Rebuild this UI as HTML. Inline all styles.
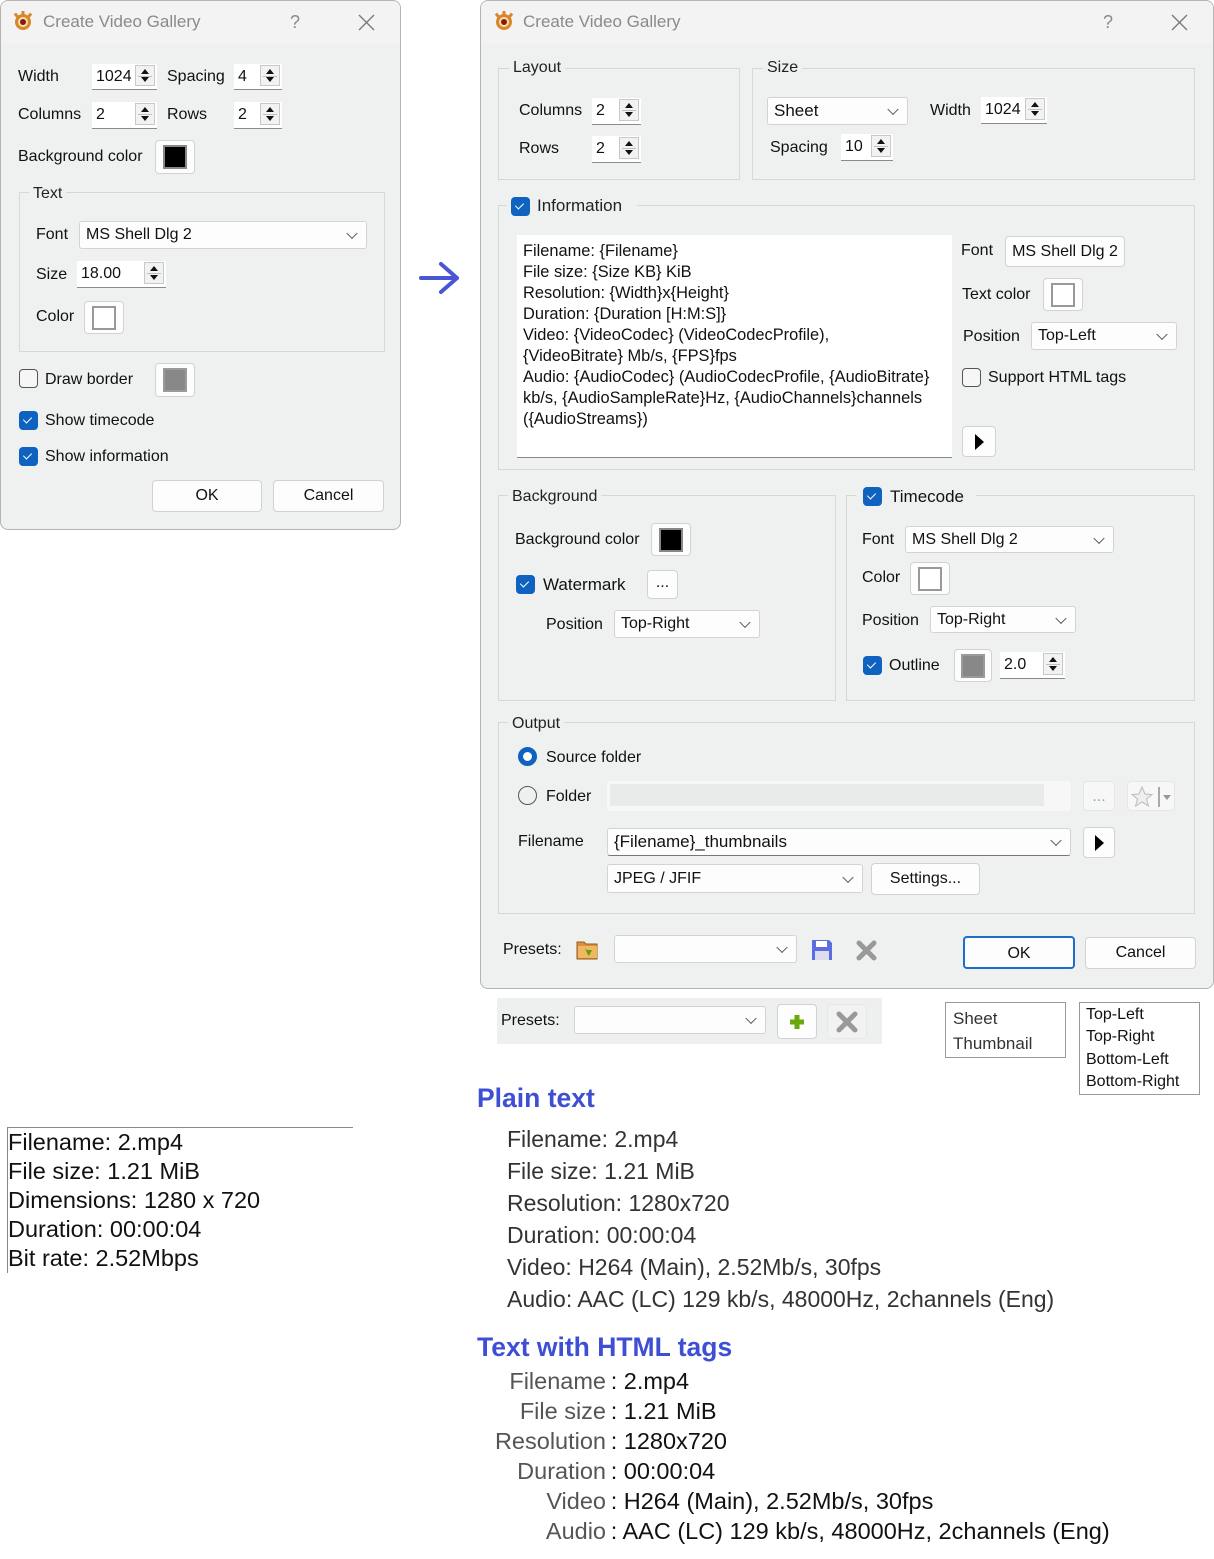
<!DOCTYPE html>
<html><head><meta charset="utf-8"><style>
*{box-sizing:border-box;margin:0;padding:0}
body{width:1214px;height:1559px;background:#fff;position:relative;overflow:hidden;font-family:"Liberation Sans",sans-serif;color:#111}
.a{position:absolute}
.t{position:absolute;white-space:nowrap;font-size:16px;line-height:20px}
.dlg{position:absolute;background:#eff0f0;border:1px solid #b4b4b4;border-radius:8px;overflow:hidden}
.ttl{position:absolute;left:0;top:0;right:0;height:43px;background:#f3f3f3}
.ttx{position:absolute;font-size:17px;color:#8a8a8a;white-space:nowrap;line-height:20px}
.grp{position:absolute;border:1px solid #d6d7d7}
.gl{position:absolute;background:#eff0f0;padding:0 4px;font-size:16px;line-height:20px;white-space:nowrap;color:#222}
.in{position:absolute;background:#fff;border-bottom:1px solid #8a8a8a;font-size:16px;line-height:22px;padding:2px 4px;white-space:nowrap}
.sp{position:absolute;top:1px;right:2px;width:20px;bottom:3px;border:1px solid #c8c8c8;background:#f2f2f2}
.sp:before{content:"";position:absolute;left:5px;top:3px;border-left:4px solid transparent;border-right:4px solid transparent;border-bottom:5px solid #111}
.sp:after{content:"";position:absolute;left:5px;bottom:3px;border-left:4px solid transparent;border-right:4px solid transparent;border-top:5px solid #111}
.sp i{position:absolute;left:2px;right:2px;top:50%;border-top:1px solid #c0c0c0}
.btn{position:absolute;background:#fdfdfd;border:1px solid #d2d2d2;border-radius:4px;font-size:16px;text-align:center;white-space:nowrap}
.sw{position:absolute;left:50%;top:50%;transform:translate(-50%,-50%);width:24px;height:24px;border:2px solid #999}
.cmb{position:absolute;background:#fdfdfd;border:1px solid #d3d3d3;border-radius:3px;font-size:16px;white-space:nowrap;padding-left:6px}
.cmb:after{content:"";position:absolute;right:10px;top:50%;width:7px;height:7px;border-right:1px solid #555;border-bottom:1px solid #555;transform:translateY(-70%) rotate(45deg)}
.ck{position:absolute;width:19px;height:19px;border-radius:4px;background:#0f62c0}
.ck:after{content:"";position:absolute;left:6px;top:4px;width:4px;height:7px;border-right:1px solid #fff;border-bottom:1px solid #fff;transform:rotate(45deg)}
.uck{position:absolute;width:19px;height:19px;border-radius:4px;border:1px solid #555;background:#f6f6f6}
.play{position:absolute;background:#fdfdfd;border:1px solid #d2d2d2;border-radius:4px}
.play:after{content:"";position:absolute;left:50%;top:50%;margin:-8px 0 0 -4px;border-top:8px solid transparent;border-bottom:8px solid transparent;border-left:9px solid #000}
.logo{position:absolute;width:22px;height:22px}
</style></head><body>

<!-- LEFT DIALOG -->
<div class="dlg" style="left:0;top:0;width:401px;height:530px">
 <div class="ttl"></div>
 <svg class="logo" style="left:11px;top:9px" viewBox="0 0 22 22"><g fill="#d9862a"><circle cx="11" cy="12" r="8"/><rect x="9.5" y="1" width="3" height="5"/><rect x="3" y="3" width="3" height="5" transform="rotate(-40 4.5 5.5)"/><rect x="16" y="3" width="3" height="5" transform="rotate(40 17.5 5.5)"/></g><circle cx="11" cy="12" r="5" fill="#f6e0b0"/><circle cx="11" cy="12" r="3" fill="#8a1a0a"/></svg>
 <div class="ttx" style="left:42px;top:11px">Create Video Gallery</div>
 <div class="ttx" style="left:289px;top:11px;font-size:18px">?</div>
 <svg class="a" style="left:357px;top:13px" width="17" height="17"><path d="M1 1L16 16M16 1L1 16" stroke="#777" stroke-width="1.3"/></svg>

 <div class="t" style="left:17px;top:66px">Width</div>
 <div class="in" style="left:91px;top:63px;width:65px;height:26px">1024<div class="sp"><i></i></div></div>
 <div class="t" style="left:166px;top:66px">Spacing</div>
 <div class="in" style="left:233px;top:63px;width:48px;height:26px">4<div class="sp"><i></i></div></div>
 <div class="t" style="left:17px;top:104px">Columns</div>
 <div class="in" style="left:91px;top:101px;width:65px;height:27px">2<div class="sp"><i></i></div></div>
 <div class="t" style="left:166px;top:104px">Rows</div>
 <div class="in" style="left:233px;top:101px;width:48px;height:27px">2<div class="sp"><i></i></div></div>
 <div class="t" style="left:17px;top:146px">Background color</div>
 <div class="btn" style="left:154px;top:139px;width:40px;height:34px"><div class="sw" style="background:#000;border-color:#888"></div></div>

 <div class="grp" style="left:18px;top:191px;width:366px;height:160px"></div>
 <div class="gl" style="left:28px;top:183px">Text</div>
 <div class="t" style="left:35px;top:224px">Font</div>
 <div class="cmb" style="left:78px;top:220px;width:288px;height:28px;line-height:26px">MS Shell Dlg 2</div>
 <div class="t" style="left:35px;top:264px">Size</div>
 <div class="in" style="left:76px;top:260px;width:89px;height:27px">18.00<div class="sp"><i></i></div></div>
 <div class="t" style="left:35px;top:306px">Color</div>
 <div class="btn" style="left:83px;top:300px;width:40px;height:33px"><div class="sw" style="background:#fff"></div></div>

 <div class="uck" style="left:18px;top:368px"></div>
 <div class="t" style="left:44px;top:369px">Draw border</div>
 <div class="btn" style="left:154px;top:362px;width:40px;height:34px"><div class="sw" style="background:#888;border-color:#9a9a9a"></div></div>
 <div class="ck" style="left:18px;top:410px"></div>
 <div class="t" style="left:44px;top:410px">Show timecode</div>
 <div class="ck" style="left:18px;top:446px"></div>
 <div class="t" style="left:44px;top:446px">Show information</div>
 <div class="btn" style="left:151px;top:479px;width:110px;height:32px;line-height:30px">OK</div>
 <div class="btn" style="left:272px;top:479px;width:111px;height:32px;line-height:30px">Cancel</div>
</div>

<!-- ARROW -->
<svg class="a" style="left:418px;top:260px" width="44" height="38"><path d="M3 18H39M23 4L39 18L23 32" stroke="#4a55d6" stroke-width="4" fill="none" stroke-linecap="round" stroke-linejoin="round"/></svg>

<!-- RIGHT DIALOG -->
<div class="dlg" style="left:480px;top:0;width:734px;height:989px">
 <div class="ttl"></div>
 <svg class="logo" style="left:12px;top:9px" viewBox="0 0 22 22"><g fill="#d9862a"><circle cx="11" cy="12" r="8"/><rect x="9.5" y="1" width="3" height="5"/><rect x="3" y="3" width="3" height="5" transform="rotate(-40 4.5 5.5)"/><rect x="16" y="3" width="3" height="5" transform="rotate(40 17.5 5.5)"/></g><circle cx="11" cy="12" r="5" fill="#f6e0b0"/><circle cx="11" cy="12" r="3" fill="#8a1a0a"/></svg>
 <div class="ttx" style="left:42px;top:11px">Create Video Gallery</div>
 <div class="ttx" style="left:622px;top:11px;font-size:18px">?</div>
 <svg class="a" style="left:690px;top:13px" width="17" height="17"><path d="M1 1L16 16M16 1L1 16" stroke="#777" stroke-width="1.3"/></svg>
</div>
<div class="grp" style="left:498px;top:68px;width:242px;height:112px"></div>
<div class="gl" style="left:509px;top:58px">Layout</div>
<div class="t" style="left:519px;top:101px">Columns</div>
<div class="in" style="left:592px;top:98px;width:49px;height:27px">2<div class="sp"><i></i></div></div>
<div class="t" style="left:519px;top:139px">Rows</div>
<div class="in" style="left:592px;top:136px;width:49px;height:27px">2<div class="sp"><i></i></div></div>

<div class="grp" style="left:752px;top:68px;width:443px;height:112px"></div>
<div class="gl" style="left:763px;top:58px">Size</div>
<div class="cmb" style="left:767px;top:97px;width:141px;height:28px;line-height:26px;font-size:17px">Sheet</div>
<div class="t" style="left:930px;top:101px">Width</div>
<div class="in" style="left:981px;top:97px;width:66px;height:27px">1024<div class="sp"><i></i></div></div>
<div class="t" style="left:770px;top:138px">Spacing</div>
<div class="in" style="left:841px;top:134px;width:52px;height:27px">10<div class="sp"><i></i></div></div>

<div class="grp" style="left:498px;top:205px;width:697px;height:265px"></div>
<div class="gl" style="left:507px;top:196px;width:130px;height:22px"></div>
<div class="ck" style="left:511px;top:197px"></div>
<div class="t" style="left:537px;top:196px;font-size:17px;color:#222">Information</div>
<div class="a" style="left:517px;top:235px;width:435px;height:223px;background:#fff;border-bottom:1px solid #888;padding:6px 6px;font-size:16.4px;line-height:21px;white-space:nowrap;overflow:hidden">Filename: {Filename}<br>File size: {Size KB} KiB<br>Resolution: {Width}x{Height}<br>Duration: {Duration [H:M:S]}<br>Video: {VideoCodec} (VideoCodecProfile),<br>{VideoBitrate} Mb/s, {FPS}fps<br>Audio: {AudioCodec} (AudioCodecProfile, {AudioBitrate}<br>kb/s, {AudioSampleRate}Hz, {AudioChannels}channels<br>({AudioStreams})</div>
<div class="t" style="left:961px;top:241px">Font</div>
<div class="btn" style="left:1005px;top:236px;width:120px;height:31px;line-height:29px">MS Shell Dlg 2</div>
<div class="t" style="left:962px;top:285px">Text color</div>
<div class="btn" style="left:1043px;top:278px;width:40px;height:33px"><div class="sw" style="background:#fff"></div></div>
<div class="t" style="left:963px;top:327px">Position</div>
<div class="cmb" style="left:1031px;top:322px;width:146px;height:28px;line-height:26px">Top-Left</div>
<div class="uck" style="left:962px;top:368px"></div>
<div class="t" style="left:988px;top:368px">Support HTML tags</div>
<div class="play" style="left:962px;top:426px;width:34px;height:31px"></div>

<div class="grp" style="left:498px;top:495px;width:338px;height:206px"></div>
<div class="gl" style="left:508px;top:487px">Background</div>
<div class="t" style="left:515px;top:530px">Background color</div>
<div class="btn" style="left:651px;top:523px;width:40px;height:33px"><div class="sw" style="background:#000;border-color:#888"></div></div>
<div class="ck" style="left:516px;top:575px"></div>
<div class="t" style="left:543px;top:575px;font-size:17px">Watermark</div>
<div class="btn" style="left:647px;top:570px;width:31px;height:29px;line-height:24px">...</div>
<div class="t" style="left:546px;top:615px">Position</div>
<div class="cmb" style="left:614px;top:610px;width:146px;height:28px;line-height:26px">Top-Right</div>

<div class="grp" style="left:846px;top:495px;width:349px;height:206px"></div>
<div class="gl" style="left:856px;top:487px;width:120px;height:22px"></div>
<div class="ck" style="left:863px;top:487px"></div>
<div class="t" style="left:890px;top:487px;font-size:17px">Timecode</div>
<div class="t" style="left:862px;top:530px">Font</div>
<div class="cmb" style="left:905px;top:526px;width:209px;height:27px;line-height:25px">MS Shell Dlg 2</div>
<div class="t" style="left:862px;top:568px">Color</div>
<div class="btn" style="left:910px;top:562px;width:40px;height:33px"><div class="sw" style="background:#fff"></div></div>
<div class="t" style="left:862px;top:611px">Position</div>
<div class="cmb" style="left:930px;top:606px;width:146px;height:27px;line-height:25px">Top-Right</div>
<div class="ck" style="left:863px;top:656px"></div>
<div class="t" style="left:889px;top:656px">Outline</div>
<div class="btn" style="left:954px;top:649px;width:38px;height:33px"><div class="sw" style="background:#888;border-color:#9a9a9a"></div></div>
<div class="in" style="left:1000px;top:652px;width:65px;height:27px">2.0<div class="sp"><i></i></div></div>

<div class="grp" style="left:498px;top:722px;width:697px;height:192px"></div>
<div class="gl" style="left:508px;top:714px">Output</div>
<div class="a" style="left:518px;top:747px;width:19px;height:19px;border-radius:50%;border:5px solid #0f62c0;background:#fff"></div>
<div class="t" style="left:546px;top:748px">Source folder</div>
<div class="a" style="left:518px;top:786px;width:19px;height:19px;border-radius:50%;border:1px solid #555"></div>
<div class="t" style="left:546px;top:787px">Folder</div>
<div class="a" style="left:607px;top:781px;width:464px;height:30px;background:#f7f7f7;border-radius:3px"><div class="a" style="left:3px;top:3px;width:434px;height:22px;background:#e9eaea"></div></div>
<div class="btn" style="left:1083px;top:781px;width:32px;height:30px;color:#8ab;line-height:30px;background:#f7f7f7;border-color:#e6e6e6">...</div>
<div class="btn" style="left:1127px;top:781px;width:48px;height:30px;background:#f7f7f7;border-color:#e6e6e6"><svg class="a" style="left:2px;top:3px" width="44" height="24"><path d="M12 2L15 9L22 9.5L16.5 14L18.5 21L12 17L5.5 21L7.5 14L2 9.5L9 9Z" fill="#eee" stroke="#bbb"/><path d="M29 2V22" stroke="#aaa" stroke-width="2"/><path d="M33 10H41L37 15Z" fill="#999"/></svg></div>
<div class="t" style="left:518px;top:832px">Filename</div>
<div class="cmb" style="left:607px;top:828px;width:464px;height:28px;line-height:26px;border-bottom-color:#777;font-size:17px">{Filename}_thumbnails</div>
<div class="play" style="left:1083px;top:827px;width:32px;height:31px"></div>
<div class="cmb" style="left:607px;top:864px;width:256px;height:29px;line-height:27px">JPEG / JFIF</div>
<div class="btn" style="left:871px;top:863px;width:109px;height:32px;line-height:30px">Settings...</div>

<div class="t" style="left:503px;top:940px">Presets:</div>
<svg class="a" style="left:576px;top:938px" width="23" height="23"><path d="M1 4H8L10 6H21V21H1Z" fill="#d8923c" stroke="#9a5a1a"/><rect x="2" y="8" width="19" height="12" fill="#f0b860"/><path d="M9 10L14 15L12 17Z M10 12L16 12L13 18Z" fill="#5aa010"/></svg>
<div class="cmb" style="left:614px;top:935px;width:183px;height:28px"></div>
<svg class="a" style="left:811px;top:939px" width="22" height="22"><path d="M1 1H18L21 4V21H1Z" fill="#5b6de0"/><rect x="5" y="2" width="11" height="6" fill="#fff"/><rect x="4" y="12" width="14" height="9" fill="#dde"/></svg>
<svg class="a" style="left:856px;top:940px" width="21" height="21"><path d="M3 3L18 18M18 3L3 18" stroke="#999" stroke-width="5" stroke-linecap="round"/></svg>
<div class="btn" style="left:963px;top:936px;width:112px;height:33px;line-height:31px;border:2px solid #1c6ec9">OK</div>
<div class="btn" style="left:1085px;top:937px;width:111px;height:32px;line-height:30px">Cancel</div>

<!-- presets panel -->
<div class="a" style="left:497px;top:998px;width:385px;height:46px;background:#eeefef"></div>
<div class="t" style="left:501px;top:1011px">Presets:</div>
<div class="cmb" style="left:574px;top:1006px;width:192px;height:28px"></div>
<div class="btn" style="left:777px;top:1004px;width:40px;height:35px"><svg class="a" style="left:10px;top:8px" width="18" height="18"><path d="M9 2V16M2 9H16" stroke="#6aa80e" stroke-width="5"/></svg></div>
<div class="btn" style="left:827px;top:1004px;width:40px;height:35px;background:#f2f2f2;border-color:#e8e8e8"><svg class="a" style="left:8px;top:6px" width="22" height="22"><path d="M3 3L19 19M19 3L3 19" stroke="#999" stroke-width="5" stroke-linecap="round"/></svg></div>

<div class="a" style="left:945px;top:1002px;width:121px;height:56px;border:1px solid #999;padding:3px 7px;font-size:17px;line-height:25px;color:#333">Sheet<br>Thumbnail</div>
<div class="a" style="left:1079px;top:1002px;width:121px;height:93px;border:1px solid #999;padding:1px 6px;font-size:16px;line-height:22.3px">Top-Left<br>Top-Right<br>Bottom-Left<br>Bottom-Right</div>

<!-- left text box -->
<div class="a" style="left:7px;top:1127px;width:346px;border-top:1px solid #888"></div>
<div class="a" style="left:7px;top:1127px;height:146px;border-left:1px solid #888"></div>
<div class="a" style="left:8px;top:1128px;font-size:23.5px;line-height:29px;white-space:nowrap">Filename: 2.mp4<br>File size: 1.21 MiB<br>Dimensions: 1280 x 720<br>Duration: 00:00:04<br>Bit rate: 2.52Mbps</div>

<div class="t" style="left:477px;top:1084px;font-size:26.5px;line-height:28px;font-weight:bold;color:#3f4fd4">Plain text</div>
<div class="a" style="left:507px;top:1123px;font-size:23px;line-height:32px;white-space:nowrap;color:#333">Filename: 2.mp4<br>File size: 1.21 MiB<br>Resolution: 1280x720<br>Duration: 00:00:04<br>Video: H264 (Main), 2.52Mb/s, 30fps<br>Audio: AAC (LC) 129 kb/s, 48000Hz, 2channels (Eng)</div>

<div class="t" style="left:477px;top:1333px;font-size:26.5px;line-height:28px;font-weight:bold;color:#3f4fd4">Text with HTML tags</div>
<div class="a" style="left:400px;top:1366px;width:206px;text-align:right;font-size:23.5px;line-height:30px;color:#555;white-space:nowrap">Filename<br>File size<br>Resolution<br>Duration<br>Video<br>Audio</div>
<div class="a" style="left:606px;top:1366px;font-size:23.5px;line-height:30px;white-space:nowrap">&#8201;: 2.mp4<br>&#8201;: 1.21 MiB<br>&#8201;: 1280x720<br>&#8201;: 00:00:04<br>&#8201;: H264 (Main), 2.52Mb/s, 30fps<br>&#8201;: AAC (LC) 129 kb/s, 48000Hz, 2channels (Eng)</div>

</body></html>
